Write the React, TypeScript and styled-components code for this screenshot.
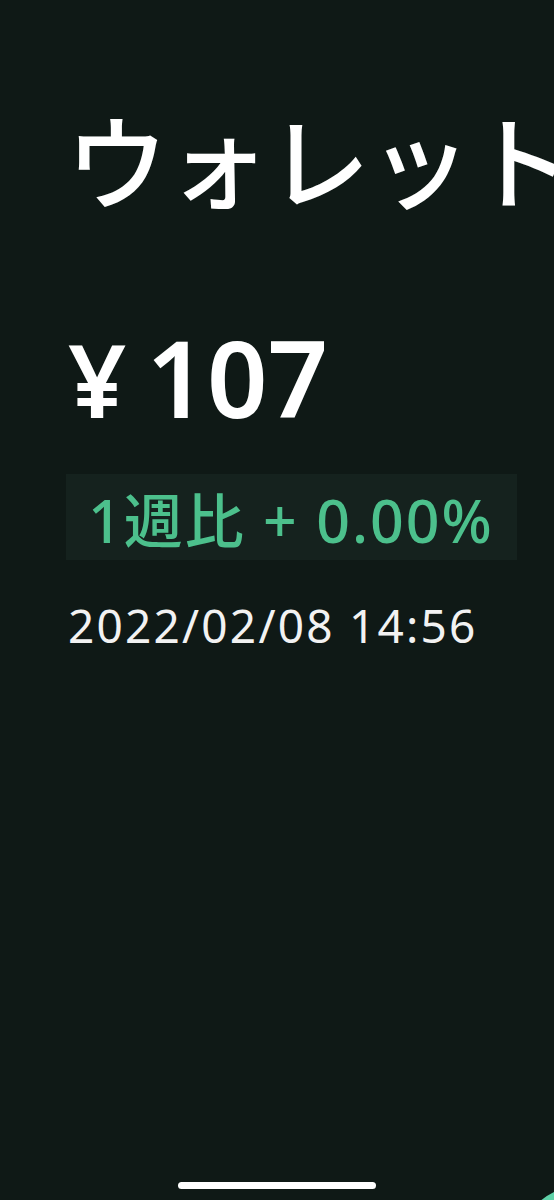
import React from 'react';
import styled, { createGlobalStyle } from 'styled-components';

const GlobalStyle = createGlobalStyle`
  html, body {
    margin: 0;
    padding: 0;
    background: #0f1916;
  }
  body {
    font-family: "Noto Sans CJK JP", "Noto Sans", sans-serif;
    color: #fff;
  }
`;

const Screen = styled.div`
  position: relative;
  width: 554px;
  height: 1200px;
  overflow: hidden;
  background: #0f1916;
  display: flex;
  flex-direction: column;
  align-items: flex-start;
  padding: 102px 0 0 66px;
  box-sizing: border-box;
`;

const Title = styled.h1`
  margin: 0;
  font-size: 102px;
  font-weight: 500;
  line-height: 1.1;
  letter-spacing: -1px;
  white-space: nowrap;
  color: #fff;
`;

const Amount = styled.div`
  margin-top: 110px;
  margin-left: 2px;
  font-family: "Noto Sans", sans-serif;
  font-size: 106px;
  font-weight: 600;
  line-height: 1;
  color: #fff;
  display: flex;
  align-items: baseline;
  gap: 20px;
`;

const Yen = styled.span`
  font-size: 102px;
`;

const ChangeBadge = styled.div`
  margin-top: 44px;
  width: 451px;
  height: 86px;
  box-sizing: border-box;
  padding-left: 22px;
  display: flex;
  align-items: center;
  background: #15221e;
  color: #4cc08c;
  font-family: "Noto Sans", "Noto Sans CJK JP", sans-serif;
  font-size: 59px;
  font-weight: 500;
  letter-spacing: 2px;
  white-space: nowrap;
`;

const Timestamp = styled.div`
  margin-top: 42px;
  margin-left: 2px;
  font-family: "Noto Sans", sans-serif;
  font-size: 46px;
  letter-spacing: 2.2px;
  line-height: 1;
  color: #f2f2f2;
`;

const Fab = styled.div`
  position: absolute;
  left: 520px;
  top: 1186px;
  width: 120px;
  height: 120px;
  border-radius: 50%;
  background: #5fd2a8;
`;

const HomeIndicator = styled.div`
  position: absolute;
  left: 178px;
  top: 1182px;
  width: 198px;
  height: 7px;
  border-radius: 4px;
  background: #fff;
`;

export default function App() {
  return (
    <>
      <GlobalStyle />
      <Screen>
        <Title>ウォレット</Title>
        <Amount>
          <Yen>¥</Yen>107
        </Amount>
        <ChangeBadge>1週比 + 0.00%</ChangeBadge>
        <Timestamp>2022/02/08 14:56</Timestamp>
        <Fab />
        <HomeIndicator />
      </Screen>
    </>
  );
}
